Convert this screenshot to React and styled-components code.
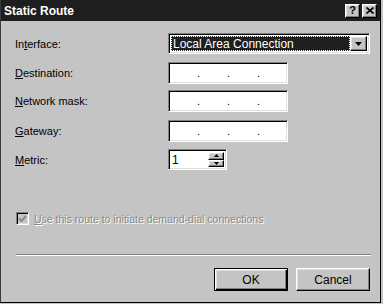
import React from "react";
import styled, { createGlobalStyle, css } from "styled-components";

const Global = createGlobalStyle`
  html, body { margin: 0; padding: 0; background: #c4c4c4; }
  body { font-family: "Liberation Sans", Arial, sans-serif; font-size: 11px; color: #000; }
  * { box-sizing: border-box; }
`;

const sunken = css`
  border: 1px solid;
  border-color: #808080 #ffffff #ffffff #808080;
  box-shadow: inset 1px 1px 0 #000, inset -1px -1px 0 #dfdfdf;
`;

const raised = css`
  border: 1px solid;
  border-color: #ffffff #000 #000 #ffffff;
  box-shadow: inset -1px -1px 0 #808080, inset 1px 1px 0 #dfdfdf;
  background: #c4c4c4;
`;

const Window = styled.div`
  width: 381px;
  height: 303px;
  background: #c4c4c4;
  border-left: 1px solid #3a3a3a;
  border-right: 1px solid #000;
  border-bottom: 1px solid #000;
  display: flex;
  flex-direction: column;
`;

const TitleBar = styled.div`
  height: 21px;
  background: #1e1e1e;
  display: flex;
  align-items: center;
  padding: 0 3px 0 3px;
  flex: none;
`;

const Title = styled.div`
  flex: 1;
  color: #fff;
  font-weight: bold;
  font-size: 12px;
`;

const CaptionButton = styled.div`
  ${raised}
  width: 15px;
  height: 14px;
  margin-left: ${(p) => p.$ml || 0}px;
  display: flex;
  align-items: center;
  justify-content: center;
  font-weight: bold;
  font-size: 11px;
  line-height: 1;
`;

const Body = styled.div`
  flex: 1;
  display: flex;
  flex-direction: column;
  padding: 12px 10px 0 14px;
`;

const Row = styled.div`
  display: flex;
  align-items: center;
  height: ${(p) => p.$h}px;
  margin-top: ${(p) => p.$mt || 0}px;
`;

const Label = styled.div`
  width: 153px;
  flex: none;
`;

const Combo = styled.div`
  ${sunken}
  width: 204px;
  height: 21px;
  background: #fff;
  display: flex;
  align-items: stretch;
  padding: 2px;
`;

const Selected = styled.div`
  flex: 1;
  background: #1e1e1e;
  color: #fff;
  outline: 1px dotted #fff;
  outline-offset: -1px;
  padding-left: 2px;
  display: flex;
  align-items: center;
  font-size: 12px;
`;

const DropButton = styled.div`
  ${raised}
  width: 17px;
  display: flex;
  align-items: center;
  justify-content: center;
`;

const IpField = styled.div`
  ${sunken}
  width: 120px;
  height: 22px;
  background: #fff;
  display: flex;
  align-items: center;
  padding-left: 28px;
`;

const Dot = styled.span`
  width: 30px;
  flex: none;
  line-height: 1;
`;

const Spin = styled.div`
  ${sunken}
  width: 59px;
  height: 21px;
  background: #fff;
  display: flex;
  padding: 2px;
`;

const SpinText = styled.div`
  flex: 1;
  padding-left: 1px;
  font-size: 12px;
  display: flex;
  align-items: center;
`;

const SpinButtons = styled.div`
  width: 16px;
  display: flex;
  flex-direction: column;
`;

const SpinButton = styled.div`
  ${raised}
  flex: 1;
  display: flex;
  align-items: center;
  justify-content: center;
`;

const CheckRow = styled.div`
  display: flex;
  align-items: center;
  margin-top: 42px;
  margin-left: 1px;
  gap: 5px;
  color: #8a8a8a;
  text-shadow: 1px 1px 0 #ffffff;
`;

const CheckLabel = styled.span`
  font-size: 10.5px;
`;

const CheckBox = styled.div`
  ${sunken}
  width: 13px;
  height: 13px;
  background: #c4c4c4;
  display: flex;
  align-items: center;
  justify-content: center;
`;

const Separator = styled.div`
  margin-top: 29px;
  margin-left: 1px;
  width: 355px;
  border-top: 1px solid #808080;
  border-bottom: 1px solid #ffffff;
`;

const ButtonRow = styled.div`
  display: flex;
  justify-content: flex-end;
  gap: 8px;
  margin-top: 12px;
`;

const Button = styled.div`
  width: 74px;
  height: 23px;
  display: flex;
  align-items: center;
  justify-content: center;
  font-size: 12px;
  ${raised}
  ${(p) =>
    p.$default &&
    css`
      border: 1px solid #000;
      box-shadow: inset 1px 1px 0 #fff, inset -1px -1px 0 #000, inset -2px -2px 0 #808080, inset 2px 2px 0 #dfdfdf;
    `}
`;

const Arrow = ({ up, size = 7 }) => (
  <svg width={size} height={Math.ceil(size / 2)} viewBox={`0 0 ${size} ${Math.ceil(size / 2)}`}>
    {up ? (
      <polygon points={`0,${Math.ceil(size / 2)} ${size},${Math.ceil(size / 2)} ${size / 2},0`} fill="#000" />
    ) : (
      <polygon points={`0,0 ${size},0 ${size / 2},${Math.ceil(size / 2)}`} fill="#000" />
    )}
  </svg>
);

const Ip = () => (
  <IpField>
    <Dot>.</Dot>
    <Dot>.</Dot>
    <Dot>.</Dot>
  </IpField>
);

export default function App() {
  return (
    <>
      <Global />
      <Window>
        <TitleBar>
          <Title>Static Route</Title>
          <CaptionButton>?</CaptionButton>
          <CaptionButton $ml={2}>
            <svg width="8" height="7" viewBox="0 0 8 7">
              <path d="M0.5 0.5 L7.5 6.5 M7.5 0.5 L0.5 6.5" stroke="#000" strokeWidth="1.6" />
            </svg>
          </CaptionButton>
        </TitleBar>
        <Body>
          <Row $h={21}>
            <Label>
              In<u>t</u>erface:
            </Label>
            <Combo>
              <Selected>Local Area Connection</Selected>
              <DropButton>
                <Arrow size={7} />
              </DropButton>
            </Combo>
          </Row>
          <Row $h={22} $mt={8}>
            <Label>
              <u>D</u>estination:
            </Label>
            <Ip />
          </Row>
          <Row $h={22} $mt={6}>
            <Label>
              <u>N</u>etwork mask:
            </Label>
            <Ip />
          </Row>
          <Row $h={22} $mt={8}>
            <Label>
              <u>G</u>ateway:
            </Label>
            <Ip />
          </Row>
          <Row $h={21} $mt={7}>
            <Label>
              <u>M</u>etric:
            </Label>
            <Spin>
              <SpinText>1</SpinText>
              <SpinButtons>
                <SpinButton>
                  <Arrow up size={5} />
                </SpinButton>
                <SpinButton>
                  <Arrow size={5} />
                </SpinButton>
              </SpinButtons>
            </Spin>
          </Row>
          <CheckRow>
            <CheckBox>
              <svg width="9" height="8" viewBox="0 0 9 8">
                <path d="M1 3.5 L3.5 6 L8 1" stroke="#8a8a8a" strokeWidth="2" fill="none" />
              </svg>
            </CheckBox>
            <CheckLabel>
              <u>U</u>se this route to initiate demand-dial connections
            </CheckLabel>
          </CheckRow>
          <Separator />
          <ButtonRow>
            <Button $default>OK</Button>
            <Button>Cancel</Button>
          </ButtonRow>
        </Body>
      </Window>
    </>
  );
}
